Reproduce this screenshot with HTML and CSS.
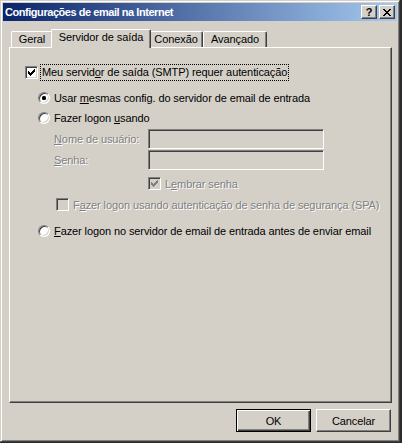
FILE: index.html
```html
<!DOCTYPE html>
<html lang="pt">
<head>
<meta charset="utf-8">
<title>Configurações de email na Internet</title>
<link rel="stylesheet" href="styles.css">
</head>
<body>
<div class="window">
  <div class="titlebar">
    <span class="title">Configurações de email na Internet</span>
    <div class="capbtns">
      <span class="capbtn help">?</span>
      <span class="capbtn close"><svg width="8" height="7" viewBox="0 0 8 7" shape-rendering="crispEdges"><path d="M0 0h2v1h-2z M6 0h2v1h-2z M1 1h2v1h-2z M5 1h2v1h-2z M2 2h4v1h-4z M3 3h2v1h-2z M2 4h4v1h-4z M1 5h2v1h-2z M5 5h2v1h-2z M0 6h2v1h-2z M6 6h2v1h-2z" fill="#000"/></svg></span>
    </div>
  </div>
  <div class="content">
    <div class="tabs">
      <div class="tab tab-geral">Geral</div>
      <div class="tab tab-servidor active">Servidor de saída</div>
      <div class="tab tab-conexao">Conexão</div>
      <div class="tab tab-avancado">Avançado</div>
    </div>
    <div class="panel">
      <div class="row row-smtp">
        <span class="check"><svg width="7" height="7" viewBox="0 0 7 7" shape-rendering="crispEdges"><path d="M0 2h1v3h-1z M1 3h1v3h-1z M2 4h1v3h-1z M3 3h1v3h-1z M4 2h1v3h-1z M5 1h1v3h-1z M6 0h1v3h-1z" fill="#000"/></svg></span>
        <span class="lbl focus">Meu servid<u>o</u>r de saída (SMTP) requer autenticação</span>
      </div>
      <div class="row row-r1 ind-radio">
        <span class="radio on"></span>
        <span class="lbl">Usar <u>m</u>esmas config. do servidor de email de entrada</span>
      </div>
      <div class="row row-r2 ind-radio">
        <span class="radio"></span>
        <span class="lbl">Fazer logon <u>u</u>sando</span>
      </div>
      <div class="row row-field row-user ind-label">
        <span class="flabel dis"><u>N</u>ome de usuário:</span>
        <span class="edit"></span>
      </div>
      <div class="row row-field row-pass ind-label">
        <span class="flabel dis"><u>S</u>enha:</span>
        <span class="edit"></span>
      </div>
      <div class="row row-remember ind-remember">
        <span class="check disabled"><svg width="7" height="7" viewBox="0 0 7 7" shape-rendering="crispEdges"><path d="M0 2h1v3h-1z M1 3h1v3h-1z M2 4h1v3h-1z M3 3h1v3h-1z M4 2h1v3h-1z M5 1h1v3h-1z M6 0h1v3h-1z" fill="#808080"/></svg></span>
        <span class="lbl dis">L<u>e</u>mbrar senha</span>
      </div>
      <div class="row row-spa ind-spa">
        <span class="check disabled"></span>
        <span class="lbl dis">F<u>a</u>zer logon usando autenticação de senha de segurança (SPA)</span>
      </div>
      <div class="row row-r3 ind-radio">
        <span class="radio"></span>
        <span class="lbl"><u>F</u>azer logon no servidor de email de entrada antes de enviar email</span>
      </div>
    </div>
    <div class="buttons">
      <span class="btn default">OK</span>
      <span class="btn">Cancelar</span>
    </div>
  </div>
</div>
</body>
</html>
```
FILE: styles.css
```css
* { box-sizing: border-box; }
html, body { margin: 0; padding: 0; }
body {
  width: 402px;
  height: 443px;
  overflow: hidden;
  background: #2b2b2b;
  font-family: "Liberation Sans", Arial, sans-serif;
  font-size: 11px;
  letter-spacing: -0.1px;
  color: #000;
}
u { text-decoration: underline; text-underline-offset: 1px; }

.window {
  width: 400px;
  height: 442px;
  background: #d4d0c8;
  border: 1px solid;
  border-color: #d4d0c8 #404040 #404040 #d4d0c8;
  box-shadow: inset 1px 1px #fff, inset -1px -1px #808080;
  padding: 2px;
  display: flex;
  flex-direction: column;
}

.titlebar {
  height: 18px;
  flex: none;
  display: flex;
  align-items: center;
  background: linear-gradient(to right, #0a246a, #a6caf0);
  color: #fff;
  font-weight: bold;
  padding-left: 2px;
}
.title { flex: 1; white-space: nowrap; letter-spacing: -0.45px; }
.capbtns { display: flex; gap: 2px; margin-right: 2px; }
.capbtn {
  width: 16px;
  height: 14px;
  background: #d4d0c8;
  border: 1px solid;
  border-color: #fff #404040 #404040 #fff;
  box-shadow: inset -1px -1px #808080;
  display: flex;
  align-items: center;
  justify-content: center;
  color: #000;
  font-weight: bold;
  font-size: 11px;
  line-height: 1;
  letter-spacing: 0;
}
.capbtn.close svg { display: block; }

.content {
  flex: 1;
  display: flex;
  flex-direction: column;
  padding: 8px 5px 0 6px;
}

.tabs {
  display: flex;
  align-items: flex-end;
  height: 18px;
  padding-left: 2px;
}
.tab {
  height: 16px;
  padding: 1px 0 0;
  line-height: 13px;
  text-align: center;
  border-top: 1px solid #fff;
  border-left: 1px solid #fff;
  border-right: 1px solid #404040;
  box-shadow: inset -1px 0 #808080;
  border-radius: 2px 2px 0 0;
  background: #d4d0c8;
  white-space: nowrap;
}
.tab-geral { width: 42px; }
.tab-servidor { width: 96px; }
.tab-conexao { width: 54px; }
.tab-avancado { width: 64px; }
.tab.active {
  position: relative;
  z-index: 2;
  width: 100px;
  height: 19px;
  margin: 0 -2px -1px;
  padding: 1px 0 0;
}

.panel {
  height: 356px;
  border: 1px solid;
  border-color: #fff #404040 #404040 #fff;
  box-shadow: inset -1px -1px #808080;
  padding: 16px 0 0 15px;
  display: flex;
  flex-direction: column;
}

.row {
  display: flex;
  align-items: center;
  height: 17px;
  white-space: nowrap;
}
.row-r1 { margin-top: 8px; }
.row-r2 { margin-top: 3px; }
.row-field { height: 20px; }
.row-user { margin-top: 3px; }
.row-pass { margin-top: 1px; }
.row-remember { margin-top: 5px; }
.row-spa { margin-top: 4px; }
.row-r3 { margin-top: 9px; }

.ind-radio { padding-left: 13px; }
.ind-label { padding-left: 29px; }
.ind-remember { padding-left: 123px; }
.ind-spa { padding-left: 31px; }

.lbl { margin-left: 4px; }
.focus {
  margin-left: 3px;
  padding: 1px 1px 2px;
  outline: 1px dotted #000;
  outline-offset: 0;
}
.dis { color: #808080; text-shadow: 1px 1px 0 #fff; }

.check {
  width: 13px;
  height: 13px;
  flex: none;
  background: #fff;
  border: 1px solid;
  border-color: #808080 #fff #fff #808080;
  box-shadow: inset 1px 1px #404040, inset -1px -1px #d4d0c8;
  padding: 2px 0 0 2px;
}
.check svg { display: block; }
.check.disabled { background: #d4d0c8; }

.radio {
  width: 12px;
  height: 12px;
  flex: none;
  border-radius: 50%;
  background: #fff;
  border: 1px solid;
  border-color: #808080 #fff #fff #808080;
  box-shadow: inset 1px 1px #404040, inset -1px -1px #d4d0c8;
  display: flex;
  align-items: center;
  justify-content: center;
}
.radio.on::after {
  content: "";
  width: 4px;
  height: 4px;
  border-radius: 1.5px;
  background: #000;
}

.flabel { width: 94px; flex: none; }
.edit {
  width: 176px;
  height: 20px;
  background: #d4d0c8;
  border: 1px solid;
  border-color: #808080 #fff #fff #808080;
  box-shadow: inset 1px 1px #404040, inset -1px -1px #d4d0c8;
}

.buttons {
  display: flex;
  justify-content: flex-end;
  gap: 5px;
  margin-top: 6px;
  padding-right: 1px;
}
.btn {
  width: 75px;
  height: 23px;
  display: flex;
  align-items: center;
  justify-content: center;
  border: 1px solid;
  border-color: #fff #404040 #404040 #fff;
  box-shadow: inset -1px -1px #808080;
  background: #d4d0c8;
}
.btn.default {
  border-color: #000;
  box-shadow: inset 1px 1px #fff, inset -1px -1px #404040, inset -2px -2px #808080;
}
```
